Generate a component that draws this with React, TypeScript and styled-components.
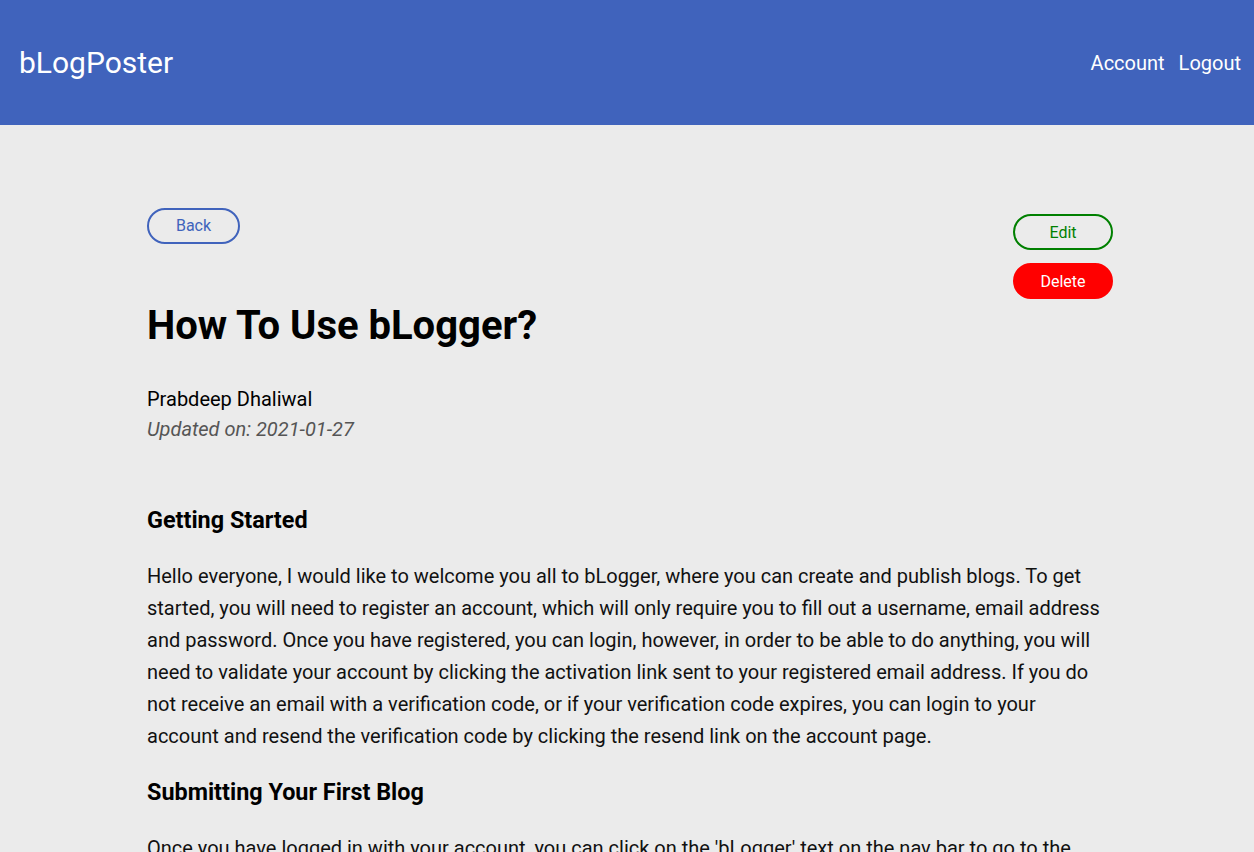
import React from "react";
import styled, { createGlobalStyle } from "styled-components";

const Global = createGlobalStyle`
  html, body { margin: 0; padding: 0; }
  body {
    background: #ebebeb;
    font-family: Roboto, "Noto Sans", Arial, sans-serif;
    color: #000;
  }
  * { box-sizing: border-box; }
`;

const Header = styled.header`
  height: 125px;
  background: #4063bc;
  display: flex;
  align-items: center;
  justify-content: space-between;
  padding: 0 13px 0 19px;
`;

const Brand = styled.a`
  color: #fff;
  font-size: 30px;
  text-decoration: none;
`;

const Nav = styled.nav`
  display: flex;
  gap: 14px;
`;

const NavLink = styled.a`
  color: #fff;
  font-size: 20px;
  text-decoration: none;
`;

const Main = styled.main`
  padding: 83px 141px 0 147px;
`;

const TopRow = styled.div`
  display: flex;
  justify-content: space-between;
  align-items: flex-start;
`;

const LeftCol = styled.div`
  display: flex;
  flex-direction: column;
  align-items: flex-start;
`;

const Actions = styled.div`
  display: flex;
  flex-direction: column;
  gap: 13px;
  margin-top: 6px;
`;

const Pill = styled.button<{ $variant: "back" | "edit" | "delete" }>`
  height: 36px;
  width: ${(p) => (p.$variant === "back" ? "93px" : "100px")};
  border-radius: 18px;
  font-family: Roboto, Arial, sans-serif;
  font-size: 16px;
  line-height: 1;
  padding: ${(p) => (p.$variant === "back" ? "0 0 1px" : "2px 0 0")};
  cursor: pointer;
  border: 2px solid
    ${(p) =>
      p.$variant === "back" ? "#4063bc" : p.$variant === "edit" ? "#008000" : "#ff0000"};
  background: ${(p) => (p.$variant === "delete" ? "#ff0000" : "transparent")};
  color: ${(p) =>
    p.$variant === "back" ? "#4063bc" : p.$variant === "edit" ? "#008000" : "#fff"};
`;

const Title = styled.h1`
  margin: 58px 0 0;
  font-size: 40px;
  line-height: 47px;
  font-weight: 700;
`;

const Meta = styled.div`
  margin-top: 35px;
  font-size: 20px;
  line-height: 30px;
`;

const Updated = styled.div`
  font-style: italic;
  color: #555;
`;

const Body = styled.article`
  margin-top: 62px;
  max-width: 960px;
`;

const Section = styled.h2`
  margin: 0 0 26px;
  font-size: 23.4px;
  line-height: 28px;
  font-weight: 700;
`;

const Para = styled.p`
  margin: 0 0 26px;
  font-size: 20px;
  line-height: 32px;
  color: #111;
`;

export default function App() {
  return (
    <>
      <Global />
      <Header>
        <Brand href="#">bLogPoster</Brand>
        <Nav>
          <NavLink href="#">Account</NavLink>
          <NavLink href="#">Logout</NavLink>
        </Nav>
      </Header>
      <Main>
        <TopRow>
          <LeftCol>
            <Pill $variant="back">Back</Pill>
            <Title>How To Use bLogger?</Title>
            <Meta>
              <div>Prabdeep Dhaliwal</div>
              <Updated>Updated on: 2021-01-27</Updated>
            </Meta>
          </LeftCol>
          <Actions>
            <Pill $variant="edit">Edit</Pill>
            <Pill $variant="delete">Delete</Pill>
          </Actions>
        </TopRow>
        <Body>
          <Section>Getting Started</Section>
          <Para>
            Hello everyone, I would like to welcome you all to bLogger, where you can create and
            publish blogs. To get started, you will need to register an account, which will only
            require you to fill out a username, email address and password. Once you have
            registered, you can login, however, in order to be able to do anything, you will need
            to validate your account by clicking the activation link sent to your registered email
            address. If you do not receive an email with a verification code, or if your
            verification code expires, you can login to your account and resend the verification
            code by clicking the resend link on the account page.
          </Para>
          <Section>Submitting Your First Blog</Section>
          <Para>
            Once you have logged in with your account, you can click on the 'bLogger' text on the
            nav bar to go to the home page, where you will be able to create a new blog and see all
            of the blogs that you have written.
          </Para>
        </Body>
      </Main>
    </>
  );
}
